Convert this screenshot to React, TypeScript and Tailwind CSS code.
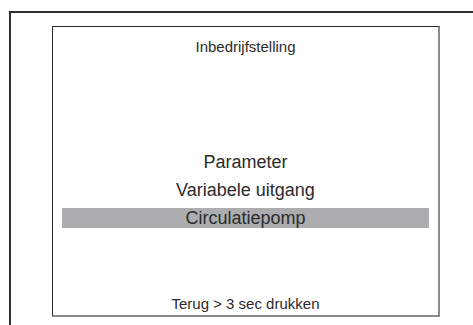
import React from "react";

export default function App() {
  return (
    <div
      className="w-[473px] h-[325px] overflow-hidden bg-white pl-[9px] pt-[11px]"
      style={{ fontFamily: '"Liberation Sans", Arial, sans-serif' }}
    >
      <div className="w-[520px] h-[400px] border-l-2 border-t-2 border-[#303030] pl-[41px] pt-[13px]">
        <div className="w-[388px] h-[291px] border-l border-t border-l-[#2a2a2a] border-t-[#2a2a2a] border-r-2 border-b-2 border-r-[#8a8a8a] border-b-[#8a8a8a] flex flex-col text-[#2b2b2b]">
          <div className="mt-[11px] text-[15px] leading-[18px] text-center">Inbedrijfstelling</div>
          <div className="mt-[96px] flex flex-col gap-[8px] text-[18px] leading-[20px] text-center">
            <div>Parameter</div>
            <div>Variabele uitgang</div>
            <div className="mx-[9px] bg-[#adadb0]">Circulatiepomp</div>
          </div>
          <div className="mt-[67px] text-[15px] leading-[18px] text-center">Terug &gt; 3 sec drukken</div>
        </div>
      </div>
    </div>
  );
}
